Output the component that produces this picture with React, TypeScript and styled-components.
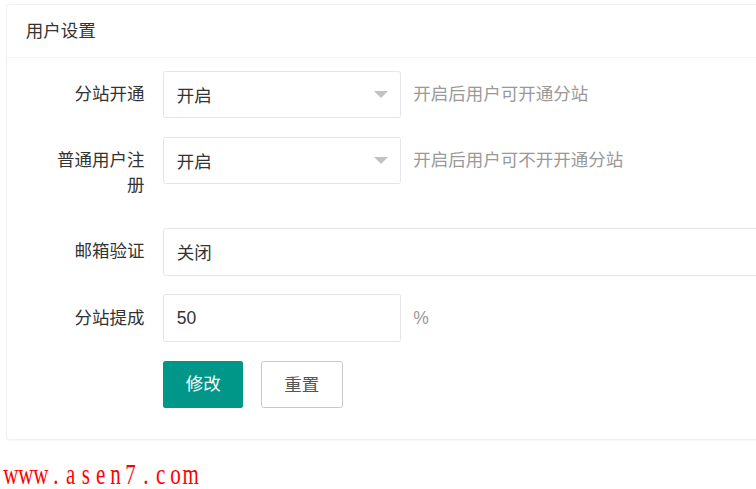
import React from "react";
import styled, { createGlobalStyle } from "styled-components";

const GlobalStyle = createGlobalStyle`
  html, body {
    margin: 0;
    padding: 0;
    background: #fff;
    overflow: hidden;
  }
  * { box-sizing: border-box; }
  body {
    font-family: "Liberation Sans", "Noto Sans CJK SC", sans-serif;
    color: #333;
  }
`;

const Page = styled.div`
  padding: 4px 0 0 6px;
  width: 960px;
`;

const Card = styled.div`
  width: 900px;
  background: #fff;
  border: 1px solid #f0f0f0;
  border-radius: 2.5px;
  box-shadow: 0 1px 2px 0 rgba(0, 0, 0, 0.04);
`;

const CardHeader = styled.div`
  height: 53px;
  line-height: 52px;
  padding: 0 18.75px;
  border-bottom: 1px solid #f3f3f3;
  font-size: 17.5px;
  color: #333;
`;

const CardBody = styled.div`
  padding: 12.5px 18.75px;
`;

const FormItem = styled.div`
  display: flex;
  align-items: flex-start;
  margin-bottom: 18.75px;
`;

const Label = styled.label`
  flex: 0 0 137.5px;
  width: 137.5px;
  padding: 11.25px 18.75px;
  line-height: 25px;
  font-size: 17.5px;
  text-align: right;
  color: #333;
`;

const InlineBox = styled.div`
  position: relative;
  width: 237.5px;
  margin-right: 12.5px;
`;

const BlockBox = styled.div`
  position: relative;
  flex: 1;
`;

const Input = styled.input`
  display: block;
  width: 100%;
  height: 47.5px;
  padding: 0 12.5px;
  border: 1px solid #e6e6e6;
  border-radius: 2.5px;
  background: #fff;
  font-family: inherit;
  font-size: 17.5px;
  color: #333;
  outline: none;
`;

const Arrow = styled.i`
  position: absolute;
  right: 12.5px;
  top: 50%;
  margin-top: -3.75px;
  width: 0;
  height: 0;
  border-left: 7.5px solid transparent;
  border-right: 7.5px solid transparent;
  border-top: 7.5px solid #c2c2c2;
`;

const Aux = styled.div`
  padding: 11.25px 0;
  line-height: 25px;
  font-size: 17.5px;
  color: #999;
`;

const ButtonRow = styled.div`
  display: flex;
  gap: 17.5px;
  padding-left: 137.5px;
  margin-bottom: 18.75px;
`;

const Button = styled.button<{ $primary?: boolean }>`
  height: 47.5px;
  padding: 0 22.5px;
  border: ${(p) => (p.$primary ? "1px solid #c9c9c9" : "0")};
  border-radius: 2.5px;
  background: ${(p) => (p.$primary ? "#fff" : "#009688")};
  color: ${(p) => (p.$primary ? "#555" : "#fff")};
  font-family: inherit;
  font-size: 17.5px;
  line-height: 47.5px;
  cursor: pointer;
`;

const Watermark = styled.div`
  display: flex;
  margin: 19px 0 0 -3px;
  font-family: "Liberation Serif", serif;
  font-size: 30px;
  line-height: 30px;
  color: #ff0000;
`;

const Cell = styled.span`
  display: flex;
  justify-content: center;
  width: 15px;
`;

const Glyph = styled.span`
  display: inline-block;
  transform: scaleX(0.7);
`;

const SelectField = ({ value }: { value: string }) => (
  <InlineBox>
    <Input readOnly defaultValue={value} />
    <Arrow />
  </InlineBox>
);

const MonoText = ({ text }: { text: string }) => (
  <Watermark>
    {text.split("").map((ch, i) => (
      <Cell key={i}>
        <Glyph>{ch}</Glyph>
      </Cell>
    ))}
  </Watermark>
);

export default function App() {
  return (
    <>
      <GlobalStyle />
      <Page>
        <Card>
          <CardHeader>用户设置</CardHeader>
          <CardBody>
            <FormItem>
              <Label>分站开通</Label>
              <SelectField value="开启" />
              <Aux>开启后用户可开通分站</Aux>
            </FormItem>
            <FormItem>
              <Label>普通用户注册</Label>
              <SelectField value="开启" />
              <Aux>开启后用户可不开开通分站</Aux>
            </FormItem>
            <FormItem>
              <Label>邮箱验证</Label>
              <BlockBox>
                <Input readOnly defaultValue="关闭" />
              </BlockBox>
            </FormItem>
            <FormItem>
              <Label>分站提成</Label>
              <InlineBox>
                <Input readOnly defaultValue="50" />
              </InlineBox>
              <Aux>%</Aux>
            </FormItem>
            <ButtonRow>
              <Button>修改</Button>
              <Button $primary>重置</Button>
            </ButtonRow>
          </CardBody>
        </Card>
        <MonoText text="www.asen7.com" />
      </Page>
    </>
  );
}
